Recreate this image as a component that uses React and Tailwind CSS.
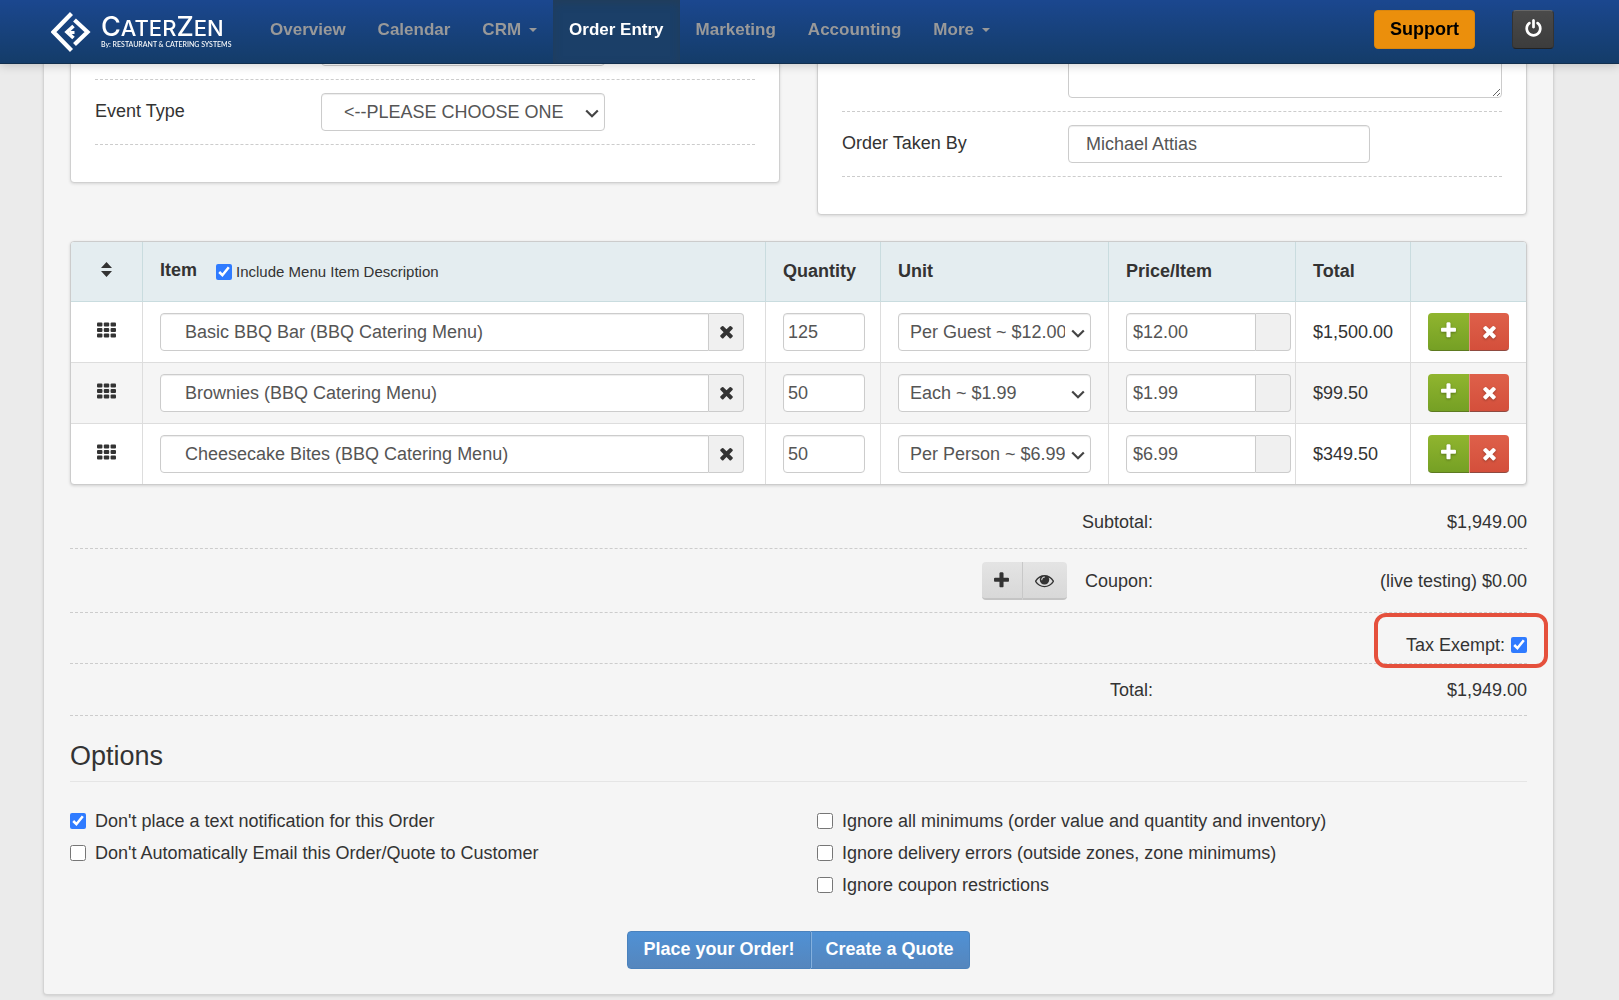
import { useState } from 'react';

const navItems = [
  { label: 'Overview' },
  { label: 'Calendar' },
  { label: 'CRM', caret: true },
  { label: 'Order Entry', active: true },
  { label: 'Marketing' },
  { label: 'Accounting' },
  { label: 'More', caret: true },
];

const initialItems = [
  { id: 1, name: 'Basic BBQ Bar (BBQ Catering Menu)', qty: 125, unit: 'Per Guest ~ $12.00', price: 12 },
  { id: 2, name: 'Brownies (BBQ Catering Menu)', qty: 50, unit: 'Each ~ $1.99', price: 1.99 },
  { id: 3, name: 'Cheesecake Bites (BBQ Catering Menu)', qty: 50, unit: 'Per Person ~ $6.99', price: 6.99 },
];

const leftOptions = [
  { id: 'noText', label: "Don't place a text notification for this Order", checked: true },
  { id: 'noEmail', label: "Don't Automatically Email this Order/Quote to Customer" },
];

const rightOptions = [
  { id: 'minimums', label: 'Ignore all minimums (order value and quantity and inventory)' },
  { id: 'delivery', label: 'Ignore delivery errors (outside zones, zone minimums)' },
  { id: 'coupon', label: 'Ignore coupon restrictions' },
];

function formatUsd(n) {
  return new Intl.NumberFormat('en-US', { style: 'currency', currency: 'USD' }).format(n);
}

const field = 'h-[38px] border border-[#ccc] rounded bg-white text-[#555] shadow-[inset_0_1px_1px_rgba(0,0,0,0.075)] outline-none';

function Icon({ d, className = '' }) {
  return (
    <svg viewBox="0 0 1792 1792" fill="currentColor" className={`size-[19px] ${className}`} aria-hidden="true">
      <path d={d} />
    </svg>
  );
}

const plusPath = 'M1600 736v192q0 40-28 68t-68 28h-416v416q0 40-28 68t-68 28h-192q-40 0-68-28t-28-68v-416h-416q-40 0-68-28t-28-68v-192q0-40 28-68t68-28h416v-416q0-40 28-68t68-28h192q40 0 68 28t28 68v416h416q40 0 68 28t28 68z';
const closePath = 'M1490 1322q0 40-28 68l-136 136q-28 28-68 28t-68-28l-294-294-294 294q-28 28-68 28t-68-28l-136-136q-28-28-28-68t28-68l294-294-294-294q-28-28-28-68t28-68l136-136q28-28 68-28t68 28l294 294 294-294q28-28 68-28t68 28l136 136q28 28 28 68t-28 68l-294 294 294 294q28 28 28 68z';
const eyePath = 'M1664 960q-152-236-381-353 61 104 61 225 0 185-131.5 316.5t-316.5 131.5-316.5-131.5-131.5-316.5q0-121 61-225-229 117-381 353 133 205 333.5 326.5t434.5 121.5 434.5-121.5 333.5-326.5zm-720-384q0-20-14-34t-34-14q-125 0-214.5 89.5t-89.5 214.5q0 20 14 34t34 14 34-14 14-34q0-86 61-147t147-61q20 0 34-14t14-34zm848 384q0 34-20 69-140 230-376.5 368.5t-499.5 138.5-499.5-139-376.5-368q-20-35-20-69t20-69q140-229 376.5-368t499.5-139 499.5 139 376.5 368q20 35 20 69z';
const powerPath = 'M1664 896q0 156-61 298t-164 245-245 164-298 61-298-61-245-164-164-245-61-298q0-182 80.5-343t226.5-270q43-32 95.5-25t83.5 50q32 42 24.5 94.5t-49.5 84.5q-98 74-151.5 181t-53.5 228q0 104 40.5 198.5t109.5 163.5 163.5 109.5 198.5 40.5 198.5-40.5 163.5-109.5 109.5-163.5 40.5-198.5q0-121-53.5-228t-151.5-181q-42-32-49.5-84.5t24.5-94.5q31-43 84-50t95 25q146 109 226.5 270t80.5 343zm-640-768v640q0 52-38 90t-90 38-90-38-38-90v-640q0-52 38-90t90-38 90 38 38 90z';

function GripIcon() {
  return (
    <svg viewBox="0 0 1792 1664" fill="currentColor" className="mx-auto h-[18px] w-[19px]" aria-hidden="true">
      {[128, 640, 1152].map((y) =>
        [0, 640, 1280].map((x) => <rect key={`${x}-${y}`} x={x} y={y} width="512" height="384" rx="96" />)
      )}
    </svg>
  );
}

function Logo() {
  return (
    <a href="#" className="flex w-44 items-center gap-2.5 text-white">
      <svg viewBox="0 0 40 40" className="size-10 shrink-0" fill="none" stroke="currentColor" aria-hidden="true">
        <path d="M20.5 1.5 L2.5 20 L20.5 38.5" strokeWidth="4.2" />
        <path d="M23.5 8 L36.5 20 L23.5 32.5" strokeWidth="4.2" />
        <path d="M22.5 14 L16 20 L22.5 26" strokeWidth="3.6" />
        <path d="M19 20.5 L23.5 20.5" strokeWidth="3" />
      </svg>
      <span className="flex flex-col">
        <span className="font-[Inter,sans-serif] text-[22px] leading-6 font-medium">
          <span className="text-[27px]">C</span>ATER<span className="text-[27px]">Z</span>EN
        </span>
        <span className="font-[Lato,sans-serif] text-[7px] leading-2 font-medium whitespace-nowrap">By: RESTAURANT &amp; CATERING SYSTEMS</span>
      </span>
    </a>
  );
}

function Navbar() {
  return (
    <header className="fixed inset-x-0 top-0 z-20 flex h-16 items-center justify-between border-b border-[#122f4e] bg-linear-to-b from-[#1b478f] to-[#143c69] pr-[65px] pl-[51px] shadow-[0_1px_10px_rgba(0,0,0,0.2)]">
      <div className="flex h-full items-center gap-[27px]">
        <Logo />
        <nav className="flex h-full">
          {navItems.map((item) => (
            <a
              key={item.label}
              href="#"
              className={`flex items-center px-4 pb-1 text-[17px] font-bold whitespace-nowrap ${
                item.active ? 'bg-[#1b3f68] text-white shadow-[inset_0_3px_8px_rgba(40,60,80,0.6)]' : 'text-[#999]'
              }`}
            >
              {item.label}
              {item.caret && <span className="ml-2 border-x-4 border-t-4 border-x-transparent border-t-[#999]" />}
            </a>
          ))}
        </nav>
      </div>
      <div className="flex items-center gap-[37px] pb-1">
        <button className="h-[39px] rounded border border-[#d9860f] bg-[#eb8f0c] px-[15px] pb-0.5 font-bold text-black">Support</button>
        <button
          aria-label="Log out"
          className="flex h-[39px] w-[42px] justify-center rounded border border-[#333] border-t-[#666] border-b-[#222] bg-linear-to-b from-[#4a4a4a] to-[#3c3c3c] pt-2 text-white"
        >
          <Icon d={powerPath} />
        </button>
      </div>
    </header>
  );
}

function Select({ className = '', wide, children, ...props }) {
  return (
    <div className={`relative ${className}`}>
      <select {...props} className={`${field} w-full appearance-none ${wide ? 'pl-[22px]' : 'pl-[11px]'} pr-[25px]`}>
        {children}
      </select>
      <svg viewBox="0 0 14 9" className="pointer-events-none absolute top-4 right-1.5 h-[9px] w-3.5" fill="none" stroke="#444" strokeWidth="2.2" aria-hidden="true">
        <path d="M1.2 1.5 L7 7.2 L12.8 1.5" />
      </svg>
    </div>
  );
}

function FormRow({ label, htmlFor, children }) {
  return (
    <div className="flex border-b border-dashed border-[#ccc] py-[13px]">
      <label htmlFor={htmlFor} className="w-[226px] shrink-0 pt-1.5">{label}</label>
      {children}
    </div>
  );
}

function Card({ children }) {
  return <div className="rounded border border-[#d0d0d0] bg-white px-6 pt-3.5 pb-[37px] shadow-[0_1px_3px_rgba(0,0,0,0.12)]">{children}</div>;
}

function ItemsTable({ items }) {
  const [withDescription, setWithDescription] = useState(true);
  const th = 'border-b border-[#c9dcdf] pl-[17px] pb-0.5 text-left font-bold not-last:border-r';

  return (
    <div className="mt-[26px] overflow-hidden rounded border border-[#ccc] bg-white shadow-[0_1px_3px_rgba(0,0,0,0.15)]">
      <table className="w-full table-fixed border-separate border-spacing-0">
        <colgroup>
          <col className="w-[72px]" />
          <col />
          <col className="w-[115px]" />
          <col className="w-[228px]" />
          <col className="w-[187px]" />
          <col className="w-[115px]" />
          <col className="w-[115px]" />
        </colgroup>
        <thead className="bg-[#e4edf0]">
          <tr className="h-[60px]">
            <th className="border-r border-b border-[#c9dcdf] pb-1" aria-label="Sort">
              <svg viewBox="0 0 11 15" className="mx-auto h-[15px] w-[11px]" fill="currentColor" aria-hidden="true">
                <path d="M5.5 0 L11 6 H0 Z M5.5 15 L11 9 H0 Z" />
              </svg>
            </th>
            <th className={th}>
              <div className="flex items-start">
                Item
                <label className="ml-[19px] flex items-center gap-1 pt-0.5 text-[15px] font-normal">
                  <input type="checkbox" className="size-4 accent-[#2f7bff]" checked={withDescription} onChange={(e) => setWithDescription(e.target.checked)} />
                  Include Menu Item Description
                </label>
              </div>
            </th>
            <th className={th}>Quantity</th>
            <th className={th}>Unit</th>
            <th className={th}>Price/Item</th>
            <th className={th}>Total</th>
            <th className={th} aria-label="Actions" />
          </tr>
        </thead>
        <tbody className="[&>tr:not(:last-child)>td]:border-b [&>tr>td]:border-[#ddd] [&>tr>td:not(:last-child)]:border-r">
          {items.map((item) => (
            <tr key={item.id} className="even:bg-[#f5f5f5]">
              <td className="pb-1"><GripIcon /></td>
              <td className="py-[11px] pr-[21px] pl-[17px]">
                <div className="flex">
                  <input aria-label="Item" defaultValue={item.name} className={`${field} min-w-0 flex-1 rounded-r-none px-6`} />
                  <button aria-label="Clear item" className="flex h-[38px] w-[35px] items-center justify-center rounded-r border border-l-0 border-[#ccc] bg-[#f0f0f0] pb-0.5">
                    <Icon d={closePath} />
                  </button>
                </div>
              </td>
              <td className="py-[11px] pl-[17px]">
                <input aria-label="Quantity" defaultValue={item.qty} className={`${field} block w-[82px] px-1`} />
              </td>
              <td className="py-[11px] pr-[17px] pl-[17px]">
                <Select aria-label="Unit" defaultValue={item.unit}>
                  <option>{item.unit}</option>
                </Select>
              </td>
              <td className="py-[11px] pr-1 pl-[17px]">
                <div className="flex">
                  <input aria-label="Price per item" defaultValue={formatUsd(item.price)} className={`${field} min-w-0 flex-1 rounded-r-none px-1.5`} />
                  <span className="h-[38px] w-[35px] rounded-r border border-l-0 border-[#ccc] bg-[#f0f0f0]" />
                </div>
              </td>
              <td className="py-[11px] pl-[17px]">{formatUsd(item.qty * item.price)}</td>
              <td className="py-[11px] pl-[17px]">
                <div className="flex text-white">
                  <button aria-label="Add item" className="flex h-[38px] w-[41px] items-center justify-center rounded-l border-b border-b-[#5d7a20] bg-linear-to-b from-[#90b52f] to-[#75a024] pb-0.5">
                    <Icon d={plusPath} className="drop-shadow-[0_1px_1px_rgba(0,0,0,0.3)]" />
                  </button>
                  <button aria-label="Remove item" className="flex h-[38px] w-10 items-center justify-center rounded-r border-b border-l border-b-[#8f4a40] border-l-[#e59082] bg-linear-to-b from-[#de604a] to-[#d44f3b]">
                    <Icon d={closePath} className="drop-shadow-[0_1px_1px_rgba(0,0,0,0.3)]" />
                  </button>
                </div>
              </td>
            </tr>
          ))}
        </tbody>
      </table>
    </div>
  );
}

function Summary() {
  const row = 'flex items-center justify-end border-b border-dashed border-[#ccc]';
  const value = 'w-[374px] text-right';

  return (
    <div>
      <div className={`${row} pt-[25px] pb-3.5`}>
        <div>Subtotal:</div>
        <div className={value}>{formatUsd(1949)}</div>
      </div>
      <div className={`${row} pt-[13px] pb-3`}>
        <div className="mr-[18px] flex">
          <button aria-label="Add coupon" className="flex h-[38px] w-[41px] items-center justify-center rounded-l border-r border-b-2 border-r-[#c8c8c8] border-b-[#c4c4c4] bg-linear-to-b from-[#e4e4e4] to-[#d8d8d8]">
            <Icon d={plusPath} />
          </button>
          <button aria-label="View coupons" className="flex h-[38px] w-11 items-center justify-center rounded-r border-b-2 border-b-[#c4c4c4] bg-linear-to-b from-[#e4e4e4] to-[#d8d8d8]">
            <Icon d={eyePath} />
          </button>
        </div>
        <div>Coupon:</div>
        <div className={value}>(live testing) {formatUsd(0)}</div>
      </div>
      <div className={`${row} relative pt-5 pb-1.5`}>
        <label className="flex items-center gap-1.5">
          Tax Exempt:
          <input type="checkbox" defaultChecked className="size-4 accent-[#2f7bff]" />
        </label>
        <div className="pointer-events-none absolute -right-[21px] top-0 h-[55px] w-[174px] rounded-xl border-4 border-[#e5503c]" />
      </div>
      <div className={`${row} pt-3.5 pb-[13px]`}>
        <div>Total:</div>
        <div className={value}>{formatUsd(1949)}</div>
      </div>
    </div>
  );
}

function OptionList({ options }) {
  return (
    <div>
      {options.map((option) => (
        <label key={option.id} className="flex h-8 items-center gap-[9px]">
          <input type="checkbox" defaultChecked={option.checked} className="size-4 accent-[#2f7bff]" />
          {option.label}
        </label>
      ))}
    </div>
  );
}

export default function App() {
  return (
    <div className="min-h-screen bg-[#ebebeb] pb-1 font-['Liberation_Sans',Arial,sans-serif] text-lg leading-6 text-[#333]">
      <Navbar />
      <main className="mr-[65px] ml-[43px] rounded-b border border-t-0 border-[#d4d4d4] bg-[#f5f5f5] px-[26px] pb-[25px] shadow-[0_1px_3px_rgba(0,0,0,0.12)]">
        <div className="grid grid-cols-2 items-start gap-[37px]">
          <Card>
            <FormRow>
              <Select wide aria-label="Event" className="w-[284px]" />
            </FormRow>
            <FormRow label="Event Type" htmlFor="eventType">
              <Select wide id="eventType" className="w-[284px]">
                <option>&lt;--PLEASE CHOOSE ONE</option>
              </Select>
            </FormRow>
          </Card>
          <Card>
            <FormRow>
              <textarea aria-label="Notes" className="h-[70px] flex-1 resize rounded border border-[#ccc] bg-white outline-none" />
            </FormRow>
            <FormRow label="Order Taken By" htmlFor="takenBy">
              <input id="takenBy" defaultValue="Michael Attias" className={`${field} w-[302px] px-[17px]`} />
            </FormRow>
          </Card>
        </div>

        <ItemsTable items={initialItems} />
        <Summary />

        <h2 className="mt-[22px] border-b border-[#e5e5e5] pb-[7px] text-[27px] leading-9">Options</h2>
        <div className="mt-[23px] grid grid-cols-2 gap-[37px]">
          <OptionList options={leftOptions} />
          <OptionList options={rightOptions} />
        </div>

        <div className="mt-[30px] flex justify-center font-bold text-white [text-shadow:0_-1px_0_rgba(0,0,0,0.25)]">
          <button className="h-[38px] rounded-l border border-[#4a82bd] bg-linear-to-b from-[#4f91d5] to-[#5586bd] px-[15px] pb-0.5">Place your Order!</button>
          <button className="h-[38px] rounded-r border border-l-0 border-[#4a82bd] bg-linear-to-b from-[#4f91d5] to-[#5586bd] px-[15px] pb-0.5 shadow-[inset_1px_0_0_#84b0de]">Create a Quote</button>
        </div>
      </main>
    </div>
  );
}
